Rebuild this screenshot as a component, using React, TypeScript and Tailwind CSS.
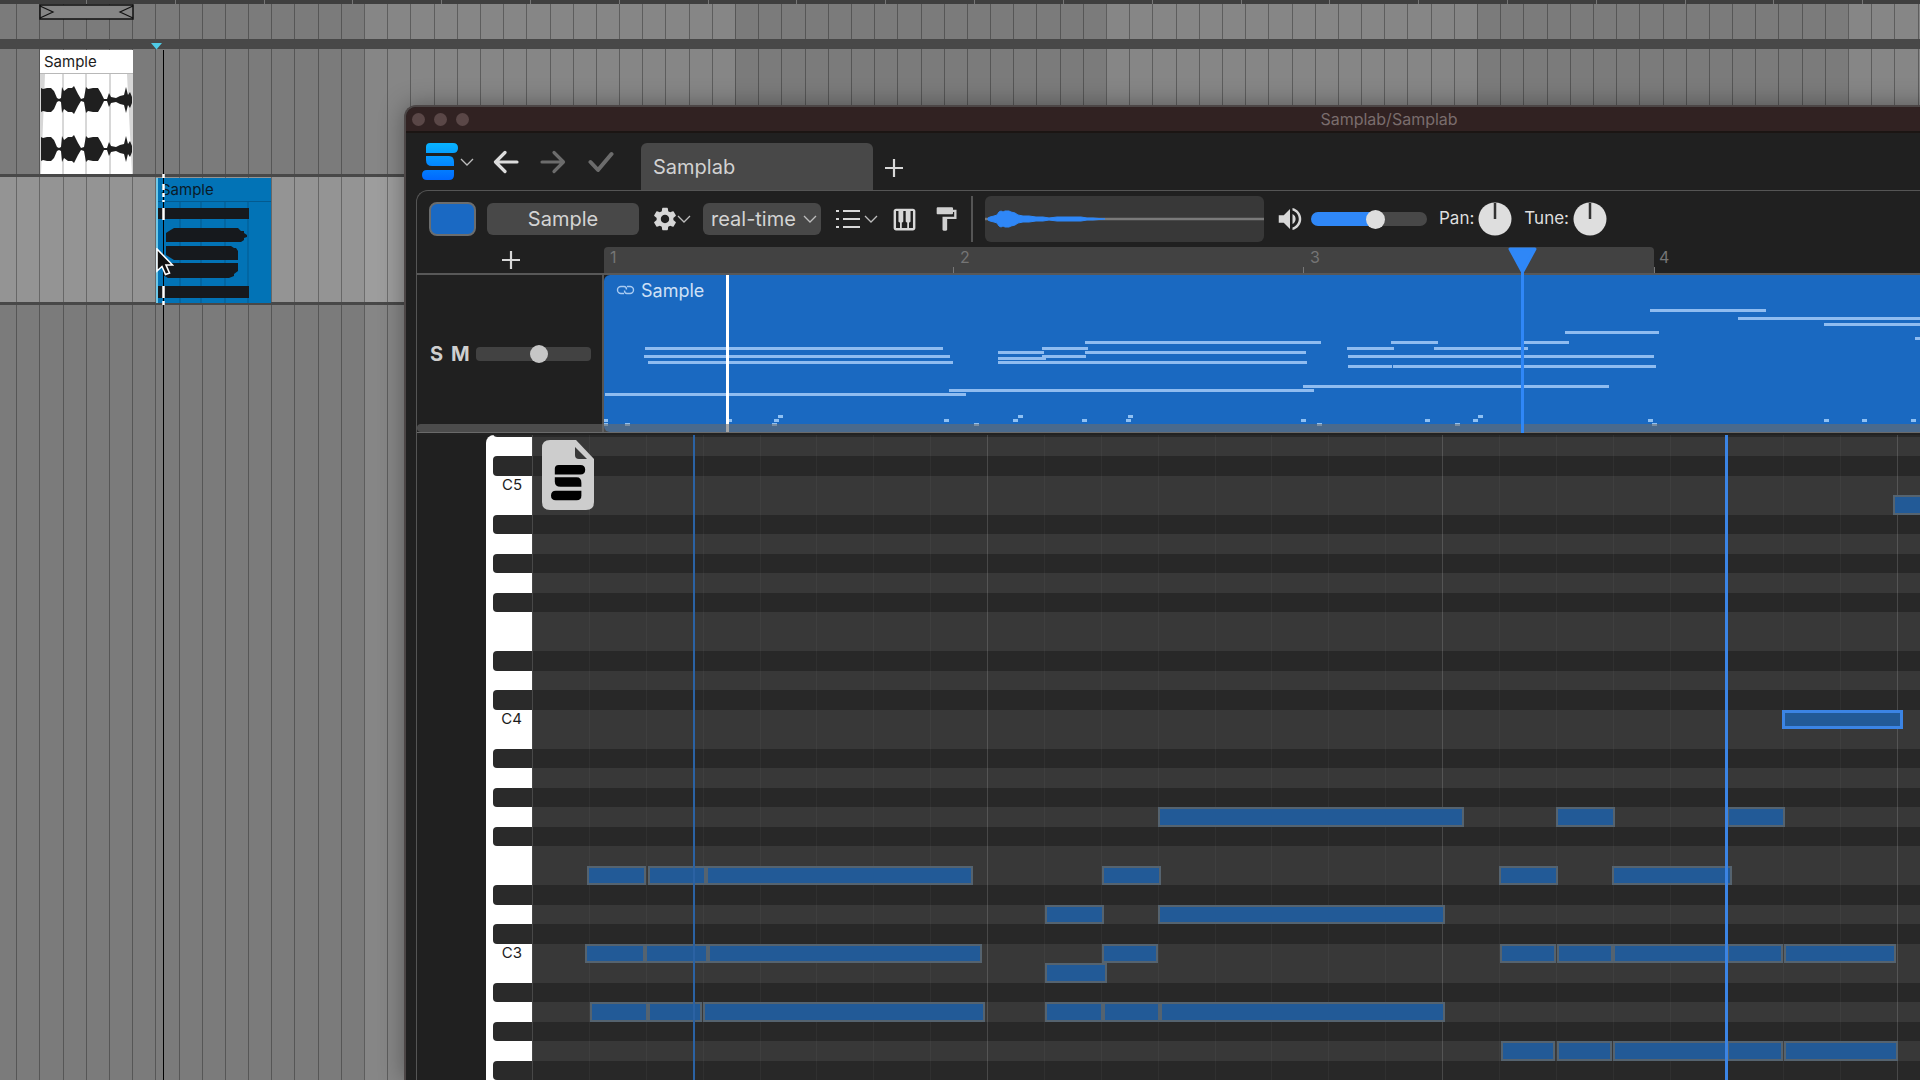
import React, { useState } from 'react'
import { MdFormatPaint, MdPiano, MdSettings, MdVolumeUp } from 'react-icons/md'

type Span = [start: number, end: number]
type Tone = 'normal' | 'light'

// Overview lines inside the clip: [x1, x2, y]
const CLIP_LINES: [number, number, number][] = [
  [41, 339, 74], [40, 346, 82], [44, 349, 88], [1, 362, 120], [345, 710, 116],
  [481, 717, 68], [438, 484, 74], [394, 440, 78], [481, 702, 78], [438, 482, 82],
  [394, 442, 84], [394, 703, 88], [699, 1005, 112], [787, 834, 68], [920, 965, 68],
  [743, 790, 74], [830, 924, 74], [744, 1050, 82], [744, 788, 92], [789, 1052, 92],
  [961, 1055, 58], [1046, 1162, 36], [1134, 1400, 44], [1220, 1400, 50], [1311, 1400, 64],
]

const CLIP_DOTS: [number, number][] = [
  [1, 145], [1, 149], [23, 149], [125, 145], [170, 149], [172, 145], [176, 141],
  [342, 145], [372, 149], [411, 145], [416, 141], [480, 145], [524, 145], [526, 141],
  [699, 145], [715, 149], [823, 145], [853, 149], [871, 145], [876, 141], [1046, 145],
  [1050, 149], [1222, 145], [1260, 145], [1309, 145],
]

const NOTES: Record<string, Span[]> = {
  B4: [[1360, 1420]],
  G3: [[625, 931], [1023, 1082], [1194, 1252]],
  E3: [[54, 113], [115, 173], [173, 440], [569, 628], [966, 1025], [1079, 1199]],
  D3: [[512, 571], [625, 912]],
  C3: [[52, 112], [112, 175], [175, 449], [569, 625], [967, 1023], [1024, 1080], [1080, 1194], [1194, 1250], [1251, 1363]],
  B2: [[512, 574]],
  A2: [[57, 115], [115, 169], [170, 452], [512, 570], [570, 627], [627, 912]],
  G2: [[968, 1022], [1024, 1079], [1080, 1194], [1194, 1250], [1251, 1365]],
}

const SELECTED: Record<string, Span[]> = {
  C4: [[1249, 1370]],
}

const PITCHES = ['B', 'A#', 'A', 'G#', 'G', 'F#', 'F', 'E', 'D#', 'D', 'C#', 'C']
const OCTAVES = [5, 4, 3, 2]
const LABELLED = [5, 4, 3]

const WAVE: [number, number][] = [
  [0, 12], [2, 11], [6, 12], [10, 12], [13, 9], [16, 2], [18, 1], [20, 2], [21, 13], [23, 9],
  [27, 12], [31, 12], [33, 14], [37, 6], [40, 1], [43, 2], [45, 13], [47, 11], [52, 12], [57, 12],
  [60, 7], [63, 1], [66, 1], [68, 7], [70, 3], [75, 2], [79, 4], [83, 5], [85, 13], [87, 5], [89, 8], [91, 3],
]

const PREVIEW: [number, number][] = [
  [3, 1], [5, 2], [9, 3], [12, 4], [14, 7], [16, 8], [18, 7], [20, 8], [24, 8], [26, 7], [30, 6], [33, 4],
  [38, 3], [44, 3], [51, 2], [58, 2], [64, 1], [72, 2], [80, 2], [88, 2], [96, 2], [102, 1], [108, 1], [120, 0],
]

const wavePath = (points: [number, number][], mid: number) => {
  const top = points.map(([x, a]) => `${x},${mid - a}`)
  const bottom = [...points].reverse().map(([x, a]) => `${x},${mid + a}`)
  return [...top, ...bottom].join(' ')
}

function Bands({ tone = 'normal' }: { tone?: Tone }) {
  const dark = tone === 'light' ? 'bg-[#949494]' : 'bg-[#7b7b7b]'
  const light = tone === 'light' ? 'bg-[#9d9d9d]' : 'bg-[#868686]'

  return (
    <div className="-ml-[7px] flex h-full">
      {[0, 1, 2, 3, 4, 5].map((band) => (
        <div key={band} className={`grid w-[371px] shrink-0 grid-cols-16 ${band % 2 ? light : dark}`}>
          {Array.from({ length: 16 }, (_, i) => (
            <div key={i} className="border-l border-black/30" />
          ))}
        </div>
      ))}
    </div>
  )
}

function AudioClip() {
  return (
    <div className="absolute top-px left-10 h-[124px] w-[93px] bg-white font-['Inter',sans-serif]">
      <div className="h-6 border-b border-[#b8b8b8] pl-1 text-[15px] leading-[24px] text-[#1c1c1c]">Sample</div>
      <svg className="block h-[100px] w-full" viewBox="0 0 93 100">
        <path d="M0 0H5L1 100H0ZM93 0H87L92 100H93Z" fill="#d6d6d6" />
        <path d="M23 0V100M46 0V100M70 0V100" stroke="#b0b0b0" />
        <polygon points={wavePath(WAVE, 26)} transform="translate(1 0)" fill="#1f1f1f" />
        <polygon points={wavePath(WAVE, 75)} transform="translate(1 0)" fill="#1f1f1f" />
      </svg>
    </div>
  )
}

function MidiClip() {
  return (
    <div className="absolute top-px left-[156px] h-[125px] w-[115px] border-l-2 border-[#6fc8e8] bg-[#0273b6] font-['Inter',sans-serif]">
      <div className="h-6 border-b border-[#035a8f] pl-[3px] text-[15px] leading-[24px] text-[#0a1a28]">Sample</div>
      <svg className="block h-[101px] w-full" viewBox="0 0 113 101">
        <path d="M22 0V101M43 0V101M67 0V101M90 0V101" stroke="#035a8f" />
        <g fill="#16191d">
          <path d="M0 6H91V17H0ZM0 84H91V96H0Z" />
          <path d="M8 31L11 29L16 26H80L83 29H86V31L89 33V35L86 36V38L83 40H8Z" />
          <path d="M8 44H73L76 46H78L80 49V58H16L8 53Z" />
          <path d="M5 61H80V69L76 72V74L71 76H10L5 73Z" />
        </g>
      </svg>
    </div>
  )
}

function InsertMarker() {
  return (
    <>
      <svg className="absolute top-[43px] left-[151px]" width="11" height="7" viewBox="0 0 11 7">
        <path d="M0 0H11L5.5 6.5Z" fill="#4fcbe6" />
      </svg>
      <div className="absolute top-[50px] bottom-0 left-[163px] w-px bg-black" />
      <svg className="absolute top-[174px] left-[162px]" width="3" height="131" viewBox="0 0 3 131">
        <path d="M1.500 0V4M1.500 10V16M1.500 19V23M1.500 26V28M1.500 34V46M1.500 112V124M1.500 127V131" stroke="#fff" strokeWidth="2.500" />
      </svg>
      <svg className="absolute top-[248px] left-[156px]" width="18" height="28" viewBox="0 0 18 28">
        <path d="M1 1V23L6 18.500L9.500 26.500L13.500 25L10 17H16.500Z" fill="#111" stroke="#fff" strokeWidth="1.600" />
      </svg>
    </>
  )
}

function Arrangement() {
  return (
    <div className="flex h-full flex-col bg-[#484848]">
      <div className="grid h-1 w-[1951px] grid-cols-21 bg-[#3f3f3f] pl-[86px]">
        {Array.from({ length: 21 }, (_, i) => (
          <div key={i} className="border-l border-[#777]" />
        ))}
      </div>
      <div className="relative h-[35px]">
        <Bands />
        <svg className="absolute top-0 left-[39px]" width="95" height="16" viewBox="0 0 95 16">
          <rect x="1" y="1" width="93" height="14" fill="#858585" stroke="#111" strokeWidth="1.500" />
          <path d="M1 2L14 8L1 14M94 2L81 8L94 14" fill="none" stroke="#111" strokeWidth="1.200" />
        </svg>
      </div>
      <div className="h-2.5" />
      <div className="relative h-[125px]">
        <Bands />
        <AudioClip />
      </div>
      <div className="h-[3px]" />
      <div className="relative h-[125px]">
        <Bands tone="light" />
        <MidiClip />
      </div>
      <div className="h-[3px]" />
      <div className="min-h-0 flex-1">
        <Bands />
      </div>
    </div>
  )
}

function Chevron() {
  return (
    <svg width="14" height="8" viewBox="0 0 14 8" fill="none" stroke="#bdbdbd" strokeWidth="1.300">
      <path d="M1 1L7 7L13 1" />
    </svg>
  )
}

function Plus() {
  return (
    <svg width="20" height="20" viewBox="0 0 20 20" fill="none" stroke="#d8d8d8" strokeWidth="2.200">
      <path d="M10 1V19M1 10H19" />
    </svg>
  )
}

function SamplabBars() {
  return (
    <>
      <path d="M8 0H31Q36 0 36 5T31 10H4V4Q4 0 8 0Z" />
      <path d="M4 13H27Q32 13 32 19V23H10Q4 23 4 17Z" />
      <path d="M5 27H32V32Q32 37 27 37H5Q0 37 0 32T5 27Z" />
    </>
  )
}

function TitleBar() {
  return (
    <div className="grid h-[26px] shrink-0 grid-cols-[1fr_auto_1fr] items-center border-b-2 border-[#1b1513] bg-[#312222] pl-1.5">
      <div className="flex gap-[9px]">
        <button aria-label="Close" className="size-[13px] rounded-full bg-[#5a4747]" />
        <button aria-label="Minimise" className="size-[13px] rounded-full bg-[#5a4747]" />
        <button aria-label="Zoom" className="size-[13px] rounded-full bg-[#5a4747]" />
      </div>
      <h1 className="text-[16px] leading-[24px] text-[#7a6d6d]">Samplab/Samplab</h1>
    </div>
  )
}

function TabBar() {
  return (
    <div className="flex h-[57px] shrink-0 items-center pl-4">
      <button aria-label="Samplab menu" className="flex w-[52px] items-center gap-0.5">
        <svg width="36" height="37" viewBox="0 0 36 37" fill="url(#brand)">
          <defs>
            <linearGradient id="brand" gradientUnits="userSpaceOnUse" x1="0" y1="0" x2="0" y2="37">
              <stop offset="0" stopColor="#08b4ff" />
              <stop offset="1" stopColor="#0068ff" />
            </linearGradient>
          </defs>
          <SamplabBars />
        </svg>
        <Chevron />
      </button>
      <button aria-label="Undo" className="ml-[19px]">
        <svg width="26" height="24" viewBox="0 0 26 24" fill="none" stroke="#dcdcdc" strokeWidth="3.200" strokeLinecap="round" strokeLinejoin="round">
          <path d="M12 2.500L2.500 12L12 21.500M3 12H24" />
        </svg>
      </button>
      <button aria-label="Redo" className="ml-[21px]">
        <svg width="26" height="24" viewBox="0 0 26 24" fill="none" stroke="#6c6c6c" strokeWidth="3.200" strokeLinecap="round" strokeLinejoin="round">
          <path d="M14 2.500L23.500 12L14 21.500M23 12H2" />
        </svg>
      </button>
      <button aria-label="Apply" className="ml-[22px]">
        <svg width="26" height="22" viewBox="0 0 26 22" fill="none" stroke="#6c6c6c" strokeWidth="4" strokeLinecap="round" strokeLinejoin="round">
          <path d="M2.500 11L10 19L23.500 3" />
        </svg>
      </button>
      <button className="ml-[27px] h-[47px] w-[232px] self-end rounded-t-md bg-[#484848] pl-3 text-left text-[20px] text-[#d2d2d2]">
        Samplab
      </button>
      <button aria-label="New tab" className="mt-3 ml-[11px]">
        <Plus />
      </button>
    </div>
  )
}

function Knob({ label }: { label: string }) {
  const [value, setValue] = useState(0)

  return (
    <label className="relative flex items-center gap-1 text-[17px] text-[#dedede]">
      {label}:
      <svg width="34" height="34" viewBox="0 0 34 34">
        <circle cx="17" cy="17" r="16.500" fill="#dedede" />
        <path d="M17 1V17" stroke="#333" strokeWidth="2.500" />
      </svg>
      <input
        type="range"
        min={-50}
        max={50}
        value={value}
        onChange={(e) => setValue(Number(e.target.value))}
        className="absolute right-0 w-[34px] opacity-0"
      />
    </label>
  )
}

function Toolbar() {
  const [volume, setVolume] = useState(57)

  return (
    <div className="flex h-14 shrink-0 items-center pl-3">
      <button aria-label="Clip colour" className="h-[34px] w-[47px] rounded-lg border-2 border-[#6b6d6e] bg-[#1a69c3]" />
      <button className="ml-[11px] h-8 w-[152px] rounded-md bg-[#484848] text-[20px] leading-8 text-[#d4d4d4]">Sample</button>
      <button aria-label="Settings" className="ml-3 flex w-10 items-center">
        <MdSettings size={28} className="-mr-0.5 shrink-0 text-[#d6d6d6]" />
        <Chevron />
      </button>
      <div className="relative ml-3 flex items-center">
        <select
          aria-label="Playback mode"
          className="h-8 w-[118px] appearance-none rounded-md bg-[#484848] pl-2 text-[20px] text-[#d4d4d4]"
        >
          <option>real-time</option>
        </select>
        <div className="pointer-events-none absolute right-1">
          <Chevron />
        </div>
      </div>
      <button aria-label="List" className="ml-[15px] flex w-[42px] items-center gap-1">
        <svg width="24" height="22" viewBox="0 0 24 22" stroke="#d8d8d8" strokeWidth="2.200">
          <path d="M0 3H3M7 3H24M0 11H3M7 11H24M0 19H3M7 19H24" />
        </svg>
        <Chevron />
      </button>
      <button aria-label="Piano roll" className="ml-3">
        <MdPiano size={29} className="text-[#d8d8d8]" />
      </button>
      <button aria-label="Paint" className="ml-[13px]">
        <MdFormatPaint size={28} className="text-[#d0d0d0]" />
      </button>
      <div className="ml-[11px] h-[46px] w-0.5 bg-[#555]" />
      <svg className="ml-3 rounded-md bg-[#383838]" width="279" height="46" viewBox="0 0 279 46">
        <path d="M0 23H279" stroke="#7a7a7a" strokeWidth="2.500" />
        <polygon points={wavePath(PREVIEW, 23)} fill="#2f87f7" stroke="#2f87f7" />
      </svg>
      <MdVolumeUp size={30} className="ml-[11px] shrink-0 text-[#d8d8d8]" />
      <input
        type="range"
        aria-label="Volume"
        value={volume}
        onChange={(e) => setVolume(Number(e.target.value))}
        style={{ backgroundImage: `linear-gradient(to right, #2f87f7 ${volume}%, #484848 ${volume}%)` }}
        className="ml-1.5 h-3.5 w-[116px] shrink-0 appearance-none rounded-full [&::-webkit-slider-thumb]:size-[19px] [&::-webkit-slider-thumb]:appearance-none [&::-webkit-slider-thumb]:rounded-full [&::-webkit-slider-thumb]:bg-[#dedede]"
      />
      <div className="ml-3 flex gap-3">
        <Knob label="Pan" />
        <Knob label="Tune" />
      </div>
    </div>
  )
}

function Ruler() {
  return (
    <div className="flex h-7 shrink-0 border-b-2 border-[#585858]">
      <div className="flex w-[187px] shrink-0 items-center justify-center">
        <button aria-label="Add track">
          <Plus />
        </button>
      </div>
      <div className="flex flex-1 text-[16px] leading-[20px] text-[#757575]">
        <div className="w-[349px] shrink-0 rounded-tl-sm bg-[#424242] pl-1.5">1</div>
        <div className="flex w-[350px] shrink-0 items-end bg-[#424242]">
          <div className="h-1.5 w-px bg-[#777]" />
          <div className="self-start pl-1.5">2</div>
        </div>
        <div className="flex w-[351px] shrink-0 items-end rounded-tr-sm bg-[#424242]">
          <div className="h-1.5 w-px bg-[#777]" />
          <div className="self-start pl-1.5">3</div>
        </div>
        <div className="flex items-end">
          <div className="h-1.5 w-px bg-[#777]" />
          <div className="self-start pl-1">4</div>
        </div>
      </div>
    </div>
  )
}

function TrackRow() {
  const [level, setLevel] = useState(56)

  return (
    <div className="relative flex h-[158px] shrink-0 border-b border-[#6a6a6a]">
      <div className="flex w-[187px] shrink-0 items-center border-r-2 border-[#555] pl-3 text-[20px] font-bold text-[#cfcfcf]">
        <button className="w-[15px]">S</button>
        <button className="ml-[7px] w-[18px]">M</button>
        <input
          type="range"
          aria-label="Track level"
          value={level}
          onChange={(e) => setLevel(Number(e.target.value))}
          className="ml-[7px] h-3.5 w-[115px] appearance-none rounded-sm bg-[#424242] [&::-webkit-slider-thumb]:size-[18px] [&::-webkit-slider-thumb]:appearance-none [&::-webkit-slider-thumb]:rounded-full [&::-webkit-slider-thumb]:bg-[#c6c6c6]"
        />
      </div>
      <div className="relative min-w-0 flex-1 overflow-hidden rounded-l-md bg-[#1a69c1]">
        <div className="flex h-[30px] items-center gap-1.5 pl-3 text-[18px] text-[#cfe0f5]">
          <svg width="19" height="10" viewBox="0 0 19 10" fill="none" stroke="#a9cbf2" strokeWidth="1.400">
            <path d="M8 8.500H5A3.500 3.500 0 0 1 5 1.500H8Q10.500 1.500 10.500 4.500M11 1.500H14A3.500 3.500 0 0 1 14 8.500H11Q8.500 8.500 8.500 5.500" />
          </svg>
          Sample
        </div>
        <svg className="absolute top-0 left-0" width="1400" height="157" viewBox="0 0 1400 157">
          {CLIP_LINES.map(([x1, x2, y], i) => (
            <rect key={i} x={x1} y={y - 2} width={x2 - x1} height="3" fill="#8fbcf0" />
          ))}
          {CLIP_DOTS.map(([x, y], i) => (
            <rect key={i} x={x - 2} y={y - 1} width="5" height="3" fill="#8fc0f2" />
          ))}
        </svg>
        <div className="absolute inset-y-0 left-[122px] w-[3px] bg-white" />
      </div>
      <div className="absolute inset-x-0 bottom-0 h-2 rounded-l bg-[#6b6b6b]/60" />
      {/* playhead spans the ruler and the clip */}
      <svg className="absolute -top-7 left-[1091px]" width="30" height="186" viewBox="0 0 30 186">
        <path d="M14.500 20V186" stroke="#2f87f7" strokeWidth="3" />
        <path d="M2 2H27L14.500 25Z" fill="#2f87f7" stroke="#2f87f7" strokeWidth="3" strokeLinejoin="round" />
      </svg>
    </div>
  )
}

function OctaveKeys({ octave }: { octave: number }) {
  return (
    <div className="grid h-[234px] shrink-0 grid-rows-12">
      {PITCHES.map((pitch) => (
        <div key={pitch} className="flex items-start justify-end text-[15px] leading-[18px] text-[#1c1c1c]">
          {pitch.includes('#') && <div className="h-full w-[39px] rounded-l bg-[#2a2a2a]" />}
          {pitch === 'C' && LABELLED.includes(octave) && <span className="pr-2.5">C{octave}</span>}
        </div>
      ))}
    </div>
  )
}

function OctaveRows({ octave }: { octave: number }) {
  return (
    <div className="grid h-[234px] shrink-0 grid-rows-12">
      {PITCHES.map((pitch) => (
        <div key={pitch} className={`relative ${pitch.includes('#') ? 'bg-[#282828]' : 'bg-[#383838]'}`}>
          {(NOTES[pitch + octave] ?? []).map(([start, end]) => (
            <div
              key={start}
              className="absolute inset-y-0 z-10 border-2 border-[#55636f] bg-[#225a97]"
              style={{ left: start, width: end - start }}
            />
          ))}
          {(SELECTED[pitch + octave] ?? []).map(([start, end]) => (
            <div
              key={start}
              className="absolute inset-y-0 z-10 border-3 border-[#3b84e4] bg-[#225a97]"
              style={{ left: start, width: end - start }}
            />
          ))}
        </div>
      ))}
    </div>
  )
}

function PianoRoll() {
  return (
    <div className="flex min-h-0 flex-1 border-t-2 border-[#222]">
      <div className="ml-[69px] w-[46px] shrink-0 overflow-hidden rounded-tl-lg bg-white">
        <div className="flex h-[60px] flex-col justify-end overflow-hidden">
          <OctaveKeys octave={OCTAVES[0]} />
        </div>
        {OCTAVES.slice(1).map((octave) => (
          <OctaveKeys key={octave} octave={octave} />
        ))}
      </div>
      <div className="relative min-w-0 flex-1 overflow-hidden border-l border-[#484848]">
        <div className="flex h-[60px] flex-col justify-end overflow-hidden">
          <OctaveRows octave={OCTAVES[0]} />
        </div>
        {OCTAVES.slice(1).map((octave) => (
          <OctaveRows key={octave} octave={octave} />
        ))}
        <div className="absolute inset-y-0 -left-px flex">
          {[0, 1, 2, 3].map((bar) => (
            <div key={bar} className="grid w-[455px] shrink-0 grid-cols-8">
              {Array.from({ length: 8 }, (_, i) => (
                <div key={i} className={i === 0 ? 'border-l border-white/15' : 'border-l border-white/4'} />
              ))}
            </div>
          ))}
        </div>
        <svg className="absolute top-[5px] left-[9px] z-10" width="52" height="70" viewBox="0 0 52 70">
          <path d="M8 0H34L52 19V62Q52 70 44 70H8Q0 70 0 62V8Q0 0 8 0Z" fill="#cdcdcd" />
          <path d="M33 7L45 19H37Q33 19 33 15Z" fill="#383838" />
          <g transform="translate(9 25) scale(.95)" fill="#000">
            <SamplabBars />
          </g>
        </svg>
        <div className="absolute inset-y-0 left-40 z-20 w-0.5 bg-[#2b62a3]" />
        <div className="absolute inset-y-0 left-[1192px] z-20 w-[3px] bg-[#3b84e4]" />
      </div>
    </div>
  )
}

function SamplabWindow() {
  // the window hangs over the right edge of the desktop
  return (
    <section className="absolute top-[105px] -right-[446px] bottom-0 left-[404px] flex flex-col overflow-hidden rounded-tl-xl border-t-2 border-l-2 border-[#4c4646] bg-[#202020] font-['Inter',sans-serif] shadow-[0_0_24px_rgba(0,0,0,0.35)]">
      <TitleBar />
      <TabBar />
      <div className="ml-2.5 flex min-h-0 flex-1 flex-col rounded-tl-xl border-t border-l border-[#555]">
        <Toolbar />
        <Ruler />
        <TrackRow />
        <PianoRoll />
      </div>
    </section>
  )
}

function App() {
  return (
    <main className="relative h-screen overflow-hidden">
      <Arrangement />
      <InsertMarker />
      <SamplabWindow />
    </main>
  )
}

export default App
